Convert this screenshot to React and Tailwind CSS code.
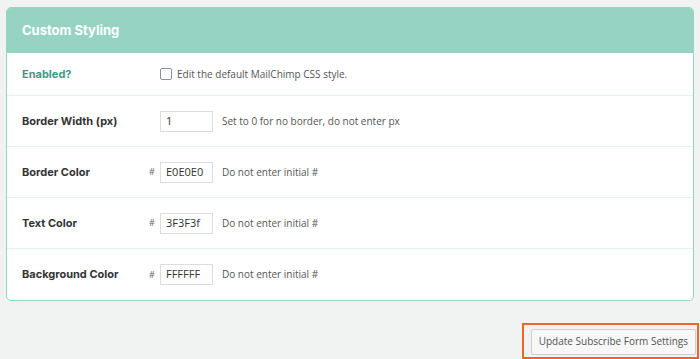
const rows = [
    { label: "Border Width (px)", value: "1", hash: false, help: "Set to 0 for no border, do not enter px" },
    { label: "Border Color", value: "E0E0E0", hash: true, help: "Do not enter initial #" },
    { label: "Text Color", value: "3F3F3f", hash: true, help: "Do not enter initial #" },
    { label: "Background Color", value: "FFFFFF", hash: true, help: "Do not enter initial #" },
];

export default function App() {
    return (
        <div className="w-[700px] h-[359px] bg-[#f1f3f2] pt-[7px] pl-[6px] overflow-hidden font-['Open_Sans',sans-serif]">
            <div className="w-[688px] border border-[#96d3c3] rounded-[5px] bg-white overflow-hidden">
                <div className="h-[45px] bg-[#96d3c3] flex items-center pl-[15px]">
                    <h2 className="text-white font-bold text-[13px] font-['Inter',sans-serif]">Custom Styling</h2>
                </div>

                <div className="h-[43px] flex items-center pl-[15px] border-b border-[#e0f3ed]">
                    <div className="w-[124px] text-[11px] font-bold text-[#3a9b87] font-['Inter',sans-serif]">Enabled?</div>
                    <div className="w-[14px]"></div>
                    <span className="w-[12px] h-[12px] border border-[#8a8f98] rounded-[2px] bg-white"></span>
                    <span className="ml-[5px] text-[10px] text-[#555]">Edit the default MailChimp CSS style.</span>
                </div>

                {rows.map((row, i) => (
                    <div key={i} className={"h-[51px] flex items-center pl-[15px] " + (i < rows.length - 1 ? "border-b border-[#e0f3ed]" : "")}>
                        <div className="w-[124px] text-[11px] font-bold text-[#333] font-['Inter',sans-serif]">{row.label}</div>
                        <div className="w-[14px] text-[9px] text-[#666] pl-[3px]">{row.hash ? "#" : ""}</div>
                        <div className="w-[53px] h-[21px] border border-[#dcdcdc] flex items-center px-[5px] text-[11px] text-[#333]">{row.value}</div>
                        <span className="ml-[9px] text-[10px] text-[#555]">{row.help}</span>
                    </div>
                ))}
            </div>

            <div className="flex justify-end pr-[1px] mt-[22px]">
                <div className="border-2 border-[#f26522] pl-[7px] pr-[1px] py-[2px]">
                    <button className="h-[26px] px-[7px] border border-[#cfcfcf] rounded-[2px] bg-[#f7f7f7] text-[10px] text-[#555]">Update Subscribe Form Settings</button>
                </div>
            </div>
        </div>
    );
}
